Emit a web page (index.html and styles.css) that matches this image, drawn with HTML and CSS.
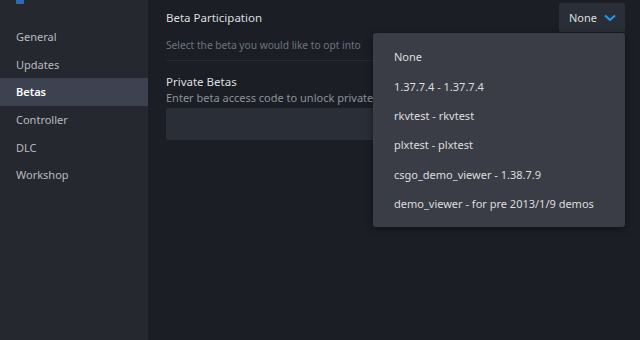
FILE: index.html
```html
<!DOCTYPE html>
<html>
<head>
<meta charset="utf-8">
<link rel="stylesheet" href="styles.css">
</head>
<body>
<div class="app">
  <aside class="sidebar">
    <div class="logo"></div>
    <nav class="nav">
      <div class="nav-item">General</div>
      <div class="nav-item">Updates</div>
      <div class="nav-item active">Betas</div>
      <div class="nav-item">Controller</div>
      <div class="nav-item">DLC</div>
      <div class="nav-item">Workshop</div>
    </nav>
  </aside>
  <main class="content">
    <div class="row">
      <div class="row-title">Beta Participation</div>
      <div class="select">
        <span>None</span>
        <svg class="chev" width="12" height="8" viewBox="0 0 12 8"><path d="M1 1.5 L6 6 L11 1.5" fill="none" stroke="#1a9fff" stroke-width="2"/></svg>
      </div>
    </div>
    <div class="desc">Select the beta you would like to opt into</div>
    <div class="private">
      <div class="row-title">Private Betas</div>
      <div class="sub">Enter beta access code to unlock private</div>
      <div class="input"></div>
    </div>
    <div class="menu">
      <div class="menu-item">None</div>
      <div class="menu-item">1.37.7.4 - 1.37.7.4</div>
      <div class="menu-item">rkvtest - rkvtest</div>
      <div class="menu-item">plxtest - plxtest</div>
      <div class="menu-item">csgo_demo_viewer - 1.38.7.9</div>
      <div class="menu-item">demo_viewer - for pre 2013/1/9 demos</div>
    </div>
  </main>
</div>
</body>
</html>
```
FILE: styles.css
```css
* { box-sizing: border-box; }
html, body { margin: 0; padding: 0; }
body {
  width: 640px;
  height: 340px;
  overflow: hidden;
  background: #1b1e25;
  font-family: "Noto Sans", "Open Sans", sans-serif;
  color: #dcdedf;
}
.app { display: flex; height: 340px; }
.sidebar {
  width: 148px;
  flex: none;
  background: #25282f;
  position: relative;
}
.logo {
  position: absolute;
  left: 16px;
  top: 0;
  width: 8px;
  height: 4px;
  background: #2f6bb3;
  border-radius: 0 0 1px 1px;
}
.nav { padding-top: 23px; }
.nav-item {
  height: 27.6px;
  display: flex;
  align-items: center;
  padding-left: 16px;
  font-size: 11px;
  color: #b8bcbf;
}
.nav-item.active { background: #3d4250; color: #ffffff; font-weight: 600; }
.content {
  flex: 1;
  position: relative;
  padding: 3px 15px 0 18px;
}
.row {
  display: flex;
  justify-content: space-between;
  align-items: center;
  height: 29px;
}
.row-title { font-size: 11.5px; color: #dcdedf; }
.select {
  width: 66px;
  height: 29px;
  background: #2a2e36;
  border-radius: 2px;
  display: flex;
  align-items: center;
  padding-left: 10px;
  gap: 7px;
  font-size: 11px;
  color: #dcdedf;
}
.chev { display: block; margin-top: 1px; }
.desc {
  margin-top: 6px;
  font-size: 10.2px;
  color: #6e757f;
  padding-bottom: 8px;
  border-bottom: 1px solid #272b32;
}
.private { padding-top: 13px; }
.sub { font-size: 11px; color: #8b929a; margin-top: 1px; }
.input {
  margin-top: 3px;
  height: 32px;
  background: #2a2e36;
  border-radius: 2px;
}
.menu {
  position: absolute;
  left: 225px;
  top: 33px;
  width: 252px;
  height: 194px;
  background: #3a3d45;
  border-radius: 3px;
  box-shadow: 0 2px 8px rgba(0,0,0,0.4);
  padding-top: 9px;
}
.menu-item {
  height: 29.4px;
  display: flex;
  align-items: center;
  padding-left: 21px;
  font-size: 11px;
  color: #dcdedf;
}
```
